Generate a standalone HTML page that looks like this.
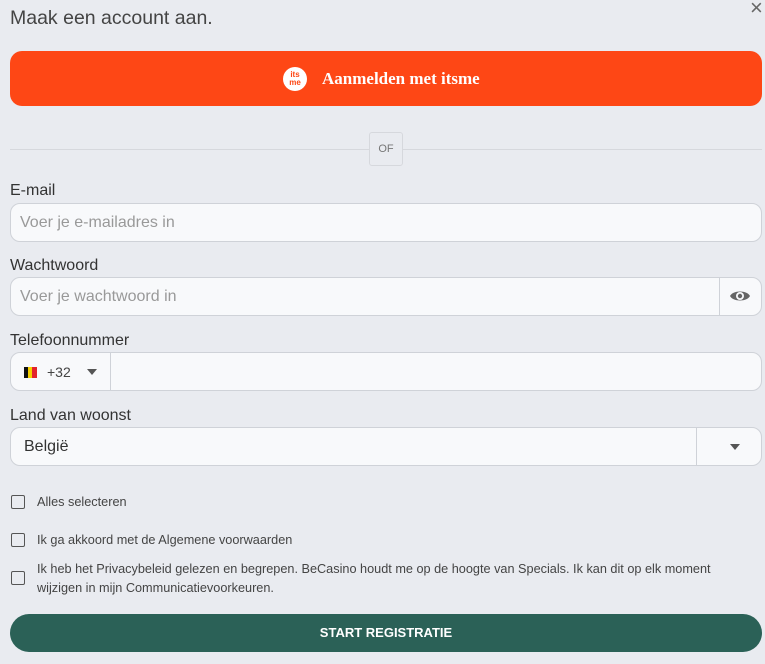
<!DOCTYPE html>
<html><head><style>
*{box-sizing:border-box;margin:0;padding:0}
body{width:765px;height:664px;background:#e9ebf0;font-family:"Liberation Sans",sans-serif;position:relative;overflow:hidden;color:#333}
.a{position:absolute}
.lbl{position:absolute;left:10px;font-size:16px;color:#333}
.inp{position:absolute;left:10px;width:752px;height:39px;background:#f8f9fb;border:1px solid #cfd2d8;border-radius:10px;font-size:16px;color:#999;padding:10px 0 0 9px}
.cb{position:absolute;left:11px;width:14px;height:14px;border:1.5px solid #555;border-radius:2px}
.ct{position:absolute;left:37px;font-size:12.7px;color:#444;line-height:19px}
</style></head><body>
<div class="a" style="left:10px;top:7px;font-size:19.5px;color:#444">Maak een account aan.</div>
<div class="a" style="left:750px;top:-5px;font-size:22px;color:#666">×</div>
<div class="a" style="left:10px;top:51px;width:752px;height:55px;background:#fe4715;border-radius:12px"></div>
<div class="a" style="left:283px;top:67px;width:24px;height:24px;background:#fff;border-radius:50%;color:#fe4715;font-size:8px;font-weight:bold;line-height:8px;text-align:center;padding-top:4px">its<br>me</div>
<div class="a" style="left:322px;top:69px;font-family:'Liberation Serif',serif;font-weight:bold;font-size:17px;color:#fff">Aanmelden met itsme</div>
<div class="a" style="left:10px;top:149px;width:752px;height:1px;background:#d6d8dd"></div>
<div class="a" style="left:369px;top:132px;width:34px;height:34px;background:#e9ebf0;border:1px solid #d6d8dd;border-radius:3px;font-size:11px;color:#777;text-align:center;line-height:32px">OF</div>
<div class="lbl" style="top:182px">E-mail</div>
<div class="inp" style="top:203px">Voer je e-mailadres in</div>
<div class="lbl" style="top:257px">Wachtwoord</div>
<div class="inp" style="top:277px">Voer je wachtwoord in</div>
<div class="a" style="left:719px;top:278px;width:1px;height:37px;background:#cfd2d8"></div>
<svg class="a" style="left:729px;top:288px" width="22" height="16" viewBox="0 0 22 16"><path d="M1 8C4 2 18 2 21 8C18 14 4 14 1 8Z" fill="#666"/><circle cx="11" cy="8" r="4" fill="#f8f9fb"/><circle cx="11" cy="8" r="2.2" fill="#666"/></svg>
<div class="lbl" style="top:332px">Telefoonnummer</div>
<div class="inp" style="top:352px"></div>
<div class="a" style="left:110px;top:353px;width:1px;height:37px;background:#cfd2d8"></div>
<div class="a" style="left:24px;top:367px;width:4px;height:11px;background:#111"></div>
<div class="a" style="left:28px;top:367px;width:4px;height:11px;background:#f5d000"></div>
<div class="a" style="left:32px;top:367px;width:5px;height:11px;background:#e3232b"></div>
<div class="a" style="left:47px;top:364px;font-size:14px;color:#444">+32</div>
<div class="a" style="left:87px;top:369px;border:5px solid transparent;border-top:6px solid #555;border-bottom:0"></div>
<div class="lbl" style="top:407px">Land van woonst</div>
<div class="inp" style="top:427px;color:#333;padding-left:13px">België</div>
<div class="a" style="left:696px;top:428px;width:1px;height:37px;background:#cfd2d8"></div>
<div class="a" style="left:730px;top:444px;border:5px solid transparent;border-top:6px solid #555;border-bottom:0"></div>
<div class="cb" style="top:495px"></div><div class="ct" style="top:493px">Alles selecteren</div>
<div class="cb" style="top:533px"></div><div class="ct" style="top:531px">Ik ga akkoord met de Algemene voorwaarden</div>
<div class="cb" style="top:571px"></div><div class="ct" style="top:560px">Ik heb het Privacybeleid gelezen en begrepen. BeCasino houdt me op de hoogte van Specials. Ik kan dit op elk moment<br>wijzigen in mijn Communicatievoorkeuren.</div>
<div class="a" style="left:10px;top:614px;width:752px;height:38px;background:#2b6157;border-radius:19px;color:#fff;font-weight:bold;font-size:13px;text-align:center;line-height:38px">START REGISTRATIE</div>
</body></html>
